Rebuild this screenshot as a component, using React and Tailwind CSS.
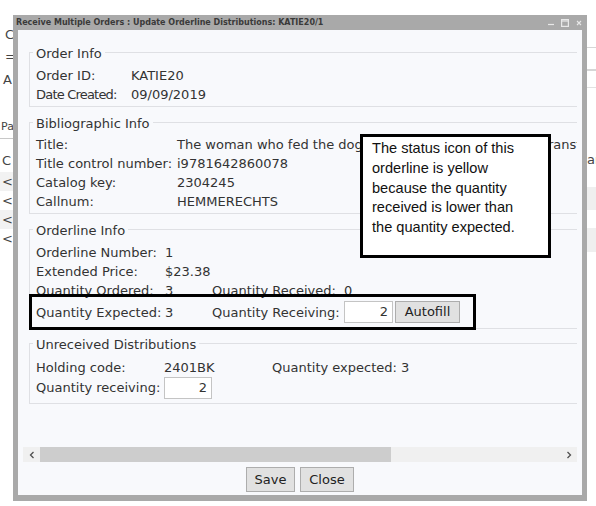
import React from "react";

const Row = ({ lw, label, children, className = "", labelClass = "" }) => (
    <div className={"flex items-center whitespace-nowrap " + className}>
        <span className={"shrink-0 " + lw + " " + labelClass}>{label}</span>
        {children}
    </div>
);

const Group = ({ title, className = "", bodyClass = "", children }) => (
    <fieldset className={"ml-[6px] w-[570px] border border-[#dfe0e4] pl-[6px] " + className}>
        <legend className="-ml-[3px] px-[3px] pt-[3px] leading-[16px]">{title}</legend>
        <div className={"leading-[18.7px] " + bodyClass}>{children}</div>
    </fieldset>
);

const Btn = ({ children, className = "" }) => (
    <button className={"border border-[#adadad] bg-[#e1e1e1] text-[#222] " + className}>{children}</button>
);

const NumBox = ({ w }) => (
    <div className={"h-[22px] border border-[#c4c4c4] bg-white pr-[4px] text-right leading-[20px] " + w}>2</div>
);

const App = () => {
    return (
        <div className="relative h-[506px] w-[596px] overflow-hidden bg-white font-['DejaVu_Sans',sans-serif] text-[13px] text-[#333]">
            {/* page behind the dialog */}
            <div className="flex h-full justify-between">
                <div className="flex w-[13px] flex-col overflow-hidden leading-[16px] text-[#444]">
                    <div className="h-[27px]" />
                    <div className="h-[22px] pl-[5px]">C</div>
                    <div className="h-[23px] pl-[5px]">=</div>
                    <div className="h-[49px] pl-[3px]">A</div>
                    <div className="h-[12px] pl-[1px] text-[11px] leading-[12px]">Pa</div>
                    <div className="h-[5px]" />
                    <div className="h-[13px] border-t border-[#c8c8c8]" />
                    <div className="h-[21px] pl-[2px] leading-[19px]">C</div>
                    <div className="h-[19px] bg-[#f2f2f2] pl-[2px] leading-[19px]">&lt;</div>
                    <div className="h-[19px] pl-[2px] leading-[19px]">&lt;</div>
                    <div className="h-[19px] bg-[#f2f2f2] pl-[2px] leading-[19px]">&lt;</div>
                    <div className="h-[19px] pl-[2px] leading-[19px]">&lt;</div>
                </div>
                <div className="flex w-[9px] flex-col overflow-hidden text-[13px] text-[#444]">
                    <div className="h-[47px]" />
                    <div className="h-[22px] border-t border-[#d6d6d6]" />
                    <div className="h-[18px] border-t-2 border-[#d6d6d6]" />
                    <div className="h-[64px] border-t border-[#e2e2e2]" />
                    <div className="h-[26px] leading-[18px]">ar</div>
                    <div className="h-[10px]" />
                    <div className="h-[23px] bg-[#efefef]" />
                    <div className="h-[18px]" />
                    <div className="h-[24px] bg-[#efefef]" />
                </div>
            </div>

            {/* dialog */}
            <div className="absolute left-[13px] top-[15px] flex h-[486px] w-[574px] flex-col">
                <div className="flex h-[15px] items-center bg-[#a9a9a9] pl-[3px] pr-[5px]">
                    <span className="flex-1 whitespace-nowrap text-[8px] font-bold text-[#3a3a3a]">
                        Receive Multiple Orders : Update Orderline Distributions: KATIE20/1
                    </span>
                    <div className="flex items-center gap-[7px]">
                        <svg width="6" height="6" viewBox="0 0 6 6"><path d="M0 4.5h6" stroke="#e8e8e8" strokeWidth="1.2" /></svg>
                        <svg width="8" height="8" viewBox="0 0 8 8"><rect x="0.6" y="0.6" width="6.8" height="6.8" fill="none" stroke="#e8e8e8" strokeWidth="1.2" /><path d="M0.6 2h6.8" stroke="#e8e8e8" strokeWidth="1.2" /></svg>
                        <svg width="6" height="6" viewBox="0 0 6 6"><path d="M1 1l4 4M5 1l-4 4" stroke="#e8e8e8" strokeWidth="1.1" /></svg>
                    </div>
                </div>

                <div className="flex flex-1 flex-col border-x-[5px] border-b-[6px] border-[#a9a9a9] bg-[#f8f9fc] pb-[3px]">
                    <div className="mx-[5px] h-[417px] overflow-hidden pt-[13px]">
                        <Group title="Order Info" bodyClass="pt-[5px] pb-[2px]">
                            <Row lw="w-[95px]" label="Order ID:">KATIE20</Row>
                            <Row lw="w-[95px]" label="Date Created:" labelClass="tracking-[-0.8px]">09/09/2019</Row>
                        </Group>

                        <Group title="Bibliographic Info" className="mt-[6px]" bodyClass="pt-[4px] pb-[2px]">
                            <Row lw="w-[141px]" label="Title:">
                                The woman who fed the dogs: a memoir of life loss and transformation
                            </Row>
                            <Row lw="w-[141px]" label="Title control number:">i9781642860078</Row>
                            <Row lw="w-[141px]" label="Catalog key:">2304245</Row>
                            <Row lw="w-[141px]" label="Callnum:">HEMMERECHTS</Row>
                        </Group>

                        <Group title="Orderline Info" className="mt-[6px]" bodyClass="pt-[5px] pb-[5px]">
                            <Row lw="w-[129px]" label="Orderline Number:">1</Row>
                            <Row lw="w-[129px]" label="Extended Price:">$23.38</Row>
                            <Row lw="w-[129px]" label="Quantity Ordered:">
                                <span className="w-[47px]">3</span>
                                <span className="w-[132px]">Quantity Received:</span>
                                <span>0</span>
                            </Row>
                            <Row lw="w-[129px]" label="Quantity Expected:" labelClass="pt-[4px]" className="h-[23px]">
                                <span className="w-[47px] pt-[4px]">3</span>
                                <span className="w-[132px] pt-[4px]">Quantity Receiving:</span>
                                <NumBox w="w-[49px]" />
                                <Btn className="ml-[2px] h-[22px] w-[65px] leading-[20px]">Autofill</Btn>
                            </Row>
                        </Group>

                        <Group title="Unreceived Distributions" className="mt-[5px]" bodyClass="pt-[6px] pb-[4px]">
                            <Row lw="w-[128px]" label="Holding code:">
                                <span className="w-[108px]">2401BK</span>
                                <span>Quantity expected: 3</span>
                            </Row>
                            <Row lw="w-[128px]" label="Quantity receiving:" className="-mt-[1px] h-[22px]">
                                <NumBox w="w-[48px]" />
                            </Row>
                        </Group>
                    </div>

                    {/* horizontal scrollbar */}
                    <div className="mx-[5px] flex h-[15px] items-stretch bg-[#f0f0f0]">
                        <div className="flex w-[17px] items-center justify-center">
                            <svg width="6" height="8" viewBox="0 0 6 8"><path d="M4.5 1L1.5 4l3 3" fill="none" stroke="#505050" strokeWidth="1.3" /></svg>
                        </div>
                        <div className="flex-1">
                            <div className="h-full w-[351px] bg-[#cdcdcd]" />
                        </div>
                        <div className="flex w-[17px] items-center justify-center">
                            <svg width="6" height="8" viewBox="0 0 6 8"><path d="M1.5 1l3 3-3 3" fill="none" stroke="#505050" strokeWidth="1.3" /></svg>
                        </div>
                    </div>

                    <div className="mt-[5px] flex justify-center gap-[5px]">
                        <Btn className="h-[25px] w-[49px]">Save</Btn>
                        <Btn className="h-[25px] w-[54px]">Close</Btn>
                    </div>
                </div>
            </div>

            {/* annotation callout */}
            <div className="absolute left-[360px] top-[134px] h-[124px] w-[191px] border-[3px] border-black bg-white pl-[9px] pr-[14px] pt-[2px] font-['Liberation_Sans',Arial,sans-serif] text-[14.6px] leading-[19.75px] text-[#111]">
                The status icon of this orderline is yellow because the quantity received is lower than the quantity expected.
            </div>

            {/* annotation highlight */}
            <div className="absolute left-[29px] top-[294px] h-[36px] w-[447px] border-[3px] border-black" />
        </div>
    );
};

export default App;
